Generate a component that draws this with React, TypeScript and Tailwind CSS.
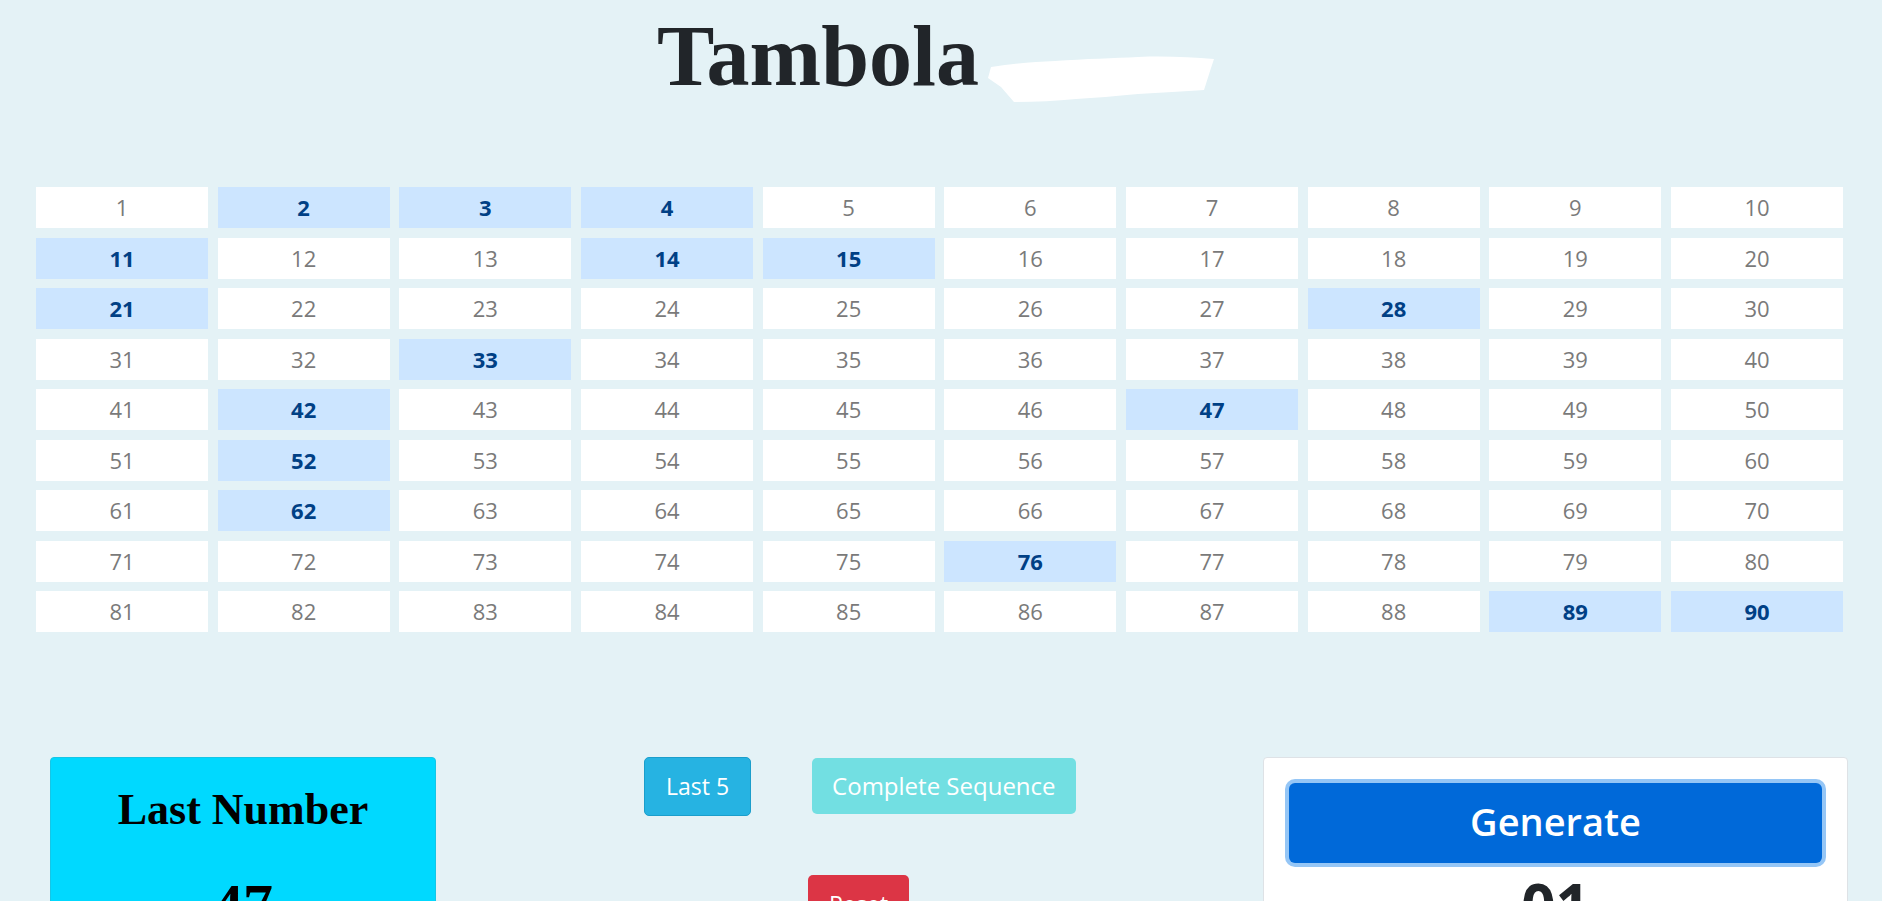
import React from "react";

// numbers already drawn in this round
const called = [2, 3, 4, 11, 14, 15, 21, 28, 33, 42, 47, 52, 62, 76, 89, 90];

const numbers = Array.from({ length: 90 }, (_, i) => i + 1);

export default function App() {
    return (
        <div className="h-screen overflow-hidden bg-[#e4f2f6] font-['Open_Sans',sans-serif]">
            {/* Heading, the second word is blanked out with a white brush stroke */}
            <div className="flex justify-center items-start mt-[6px] pr-[10px]">
                <h1 className="h-[100px] leading-[100px] text-[86px] font-bold text-[#212529] font-['Liberation_Serif',serif]">
                    Tambola
                </h1>
                <svg width="230" height="52" viewBox="0 0 230 52" className="mt-[48px] ml-[6px]">
                    <path
                        d="M6 13 C 30 9, 50 8, 70 7 C 100 5, 130 4, 153 3 C 180 2, 205 3, 229 5 L 226 14 L 219 36 C 200 37, 175 39, 153 40 C 130 42, 110 44, 91 45 C 70 47, 50 48, 29 48 L 16 33 L 3 24 Z"
                        fill="#ffffff"
                    />
                </svg>
            </div>

            {/* Board */}
            <div className="ml-[36px] mt-[81px] w-[1807px] grid grid-cols-10 gap-x-[9.67px] gap-y-[9.5px]">
                {numbers.map((n) => {
                    const hit = called.includes(n);
                    return (
                        <div
                            key={n}
                            className={
                                hit
                                    ? "h-[41px] flex items-center justify-center bg-[#cce5ff] text-[#004085] font-bold text-[22px]"
                                    : "h-[41px] flex items-center justify-center bg-white text-[#7a7a7a] text-[22px]"
                            }
                        >
                            {n}
                        </div>
                    );
                })}
            </div>

            {/* Controls */}
            <div className="flex items-start mt-[125px] pl-[50px]">
                <div className="w-[386px] h-[220px] bg-[#00d9ff] border border-[#16c6e6] rounded-[4px] flex flex-col items-center pt-[26px] font-['Liberation_Serif',serif] text-black font-bold">
                    <div className="text-[44px] leading-[1.2]">Last Number</div>
                    <div className="text-[60px] leading-[1.2] mt-[32px]">47</div>
                </div>

                <div className="w-[827px]">
                    <div className="flex items-start pl-[208px] gap-[61px]">
                        <button className="h-[59px] px-[21px] flex items-center rounded-[5px] bg-[#26b3e2] border border-[#1b9ecb] text-white text-[23px]">
                            Last 5
                        </button>
                        <button className="h-[56px] mt-[1px] px-[20px] flex items-center rounded-[5px] bg-[#72dfe2] text-white text-[24px]">
                            Complete Sequence
                        </button>
                    </div>
                    <div className="pl-[372px] mt-[59px]">
                        <button className="h-[59px] w-[101px] flex items-center justify-center rounded-[5px] bg-[#dc3545] text-white text-[23px]">
                            Reset
                        </button>
                    </div>
                </div>

                <div className="w-[585px] bg-white border border-[#dee2e6] rounded-[4px] p-[25px]">
                    <button className="w-full h-[80px] rounded-[6px] bg-[#0069d9] ring-4 ring-[#95c6f6] text-white text-[38px] font-semibold flex items-center justify-center pb-[4px]">
                        Generate
                    </button>
                    <div className="mt-[6px] text-center text-[60px] leading-[1.2] font-bold text-[#212529]">01</div>
                </div>
            </div>
        </div>
    );
}
